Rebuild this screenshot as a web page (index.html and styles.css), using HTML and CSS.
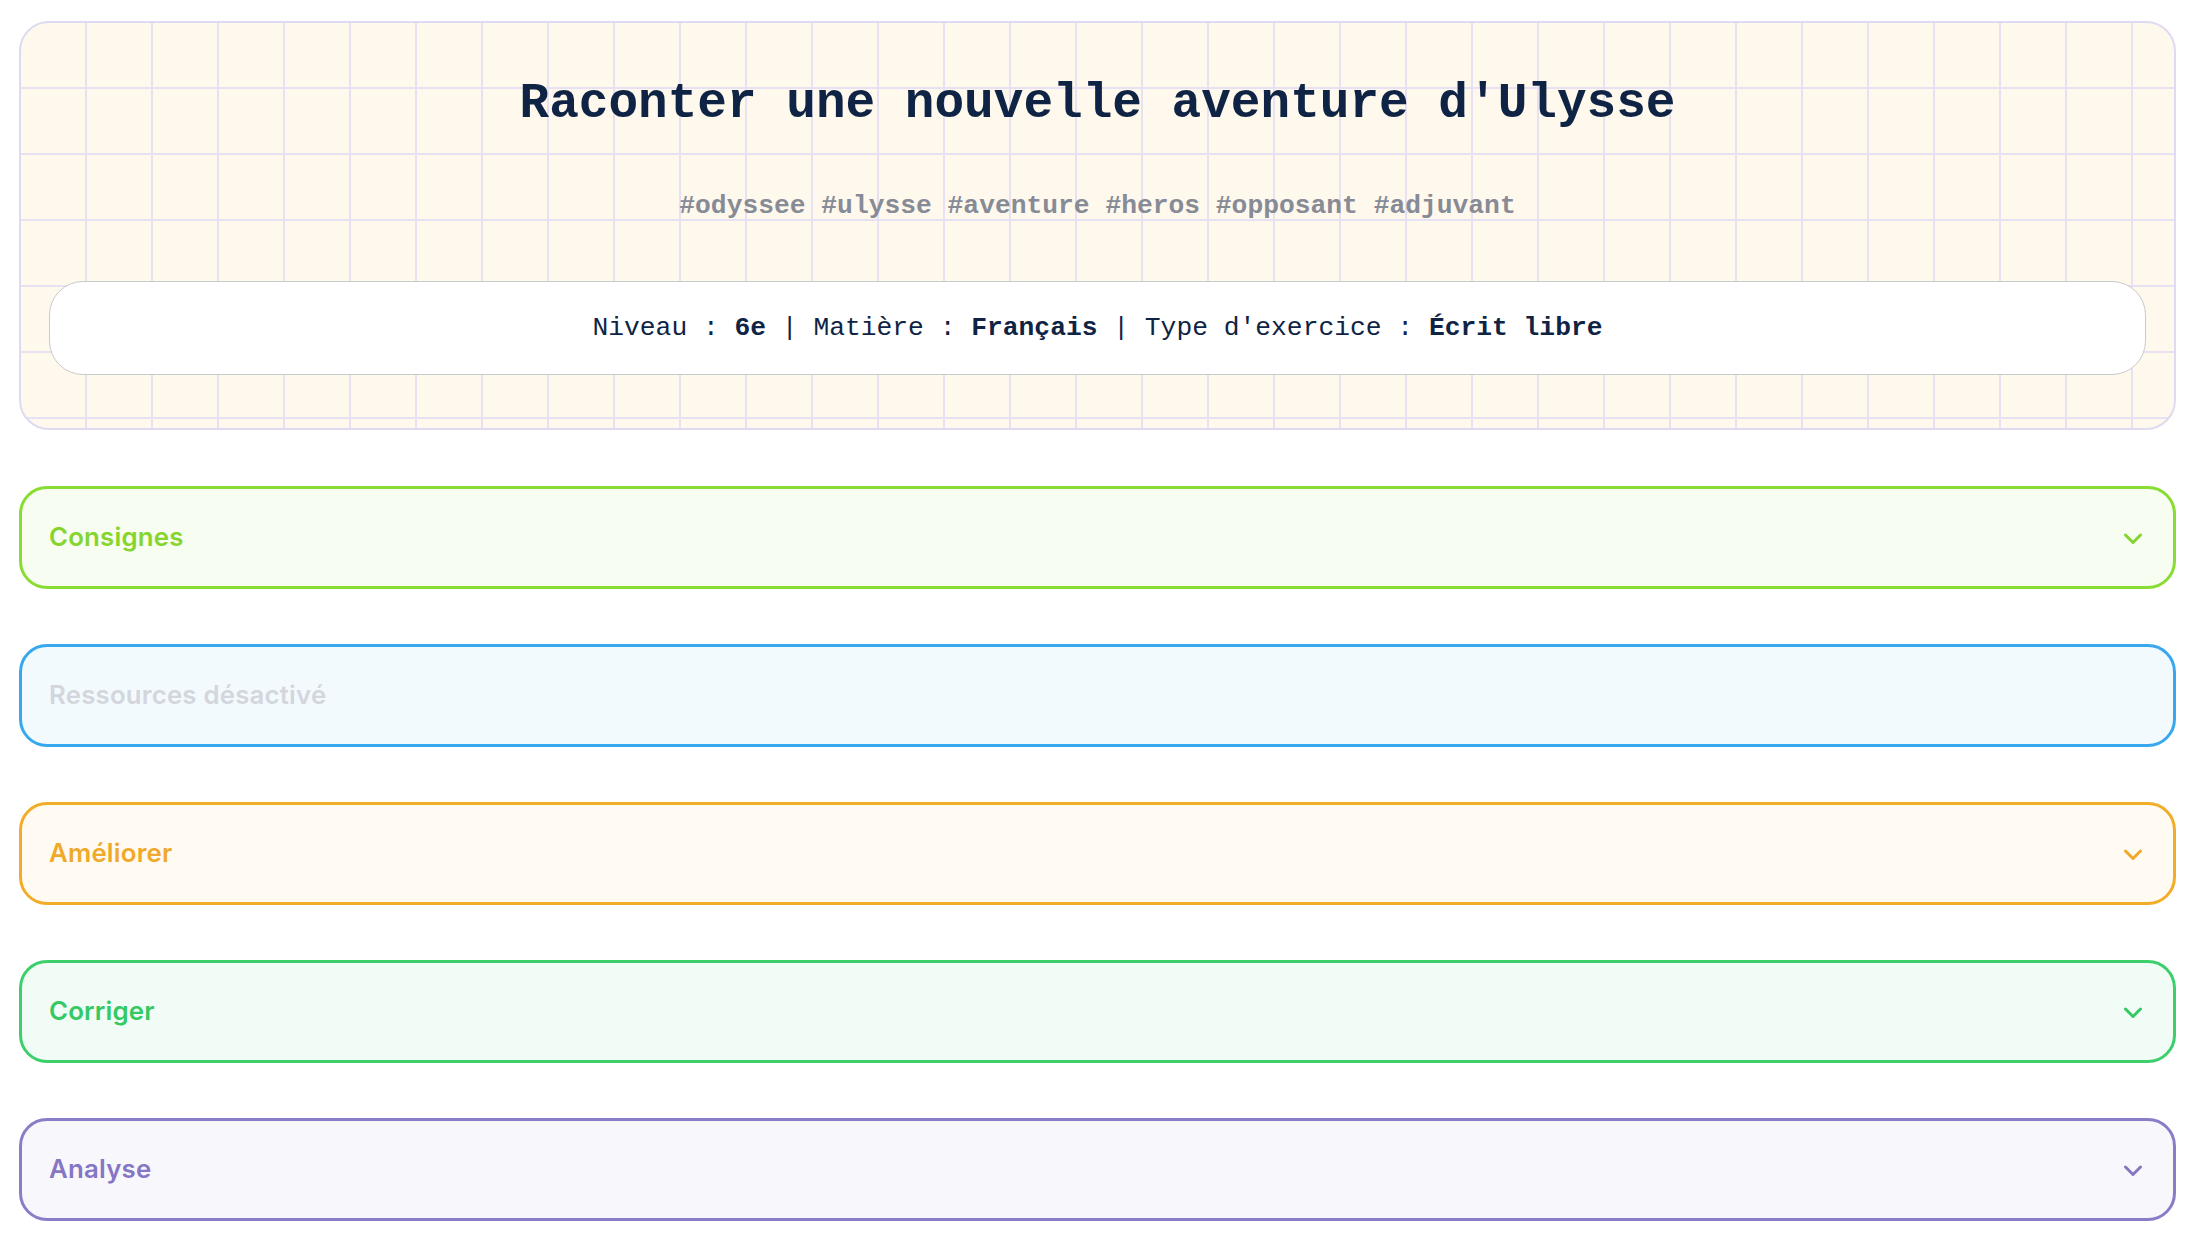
FILE: index.html
```html
<!DOCTYPE html>
<html lang="fr">
<head>
<meta charset="utf-8">
<title>Raconter une nouvelle aventure d'Ulysse</title>
<link rel="stylesheet" href="styles.css">
</head>
<body>
<main class="page">
  <header class="hero">
    <h1 class="hero-title">Raconter une nouvelle aventure d'Ulysse</h1>
    <p class="hero-tags">#odyssee #ulysse #aventure #heros #opposant #adjuvant</p>
    <div class="hero-info">Niveau : <b>6e</b> | Matière : <b>Français</b> | Type d'exercice : <b>Écrit libre</b></div>
  </header>

  <section class="panels">
    <div class="panel panel-lime">
      <span class="panel-label">Consignes</span>
      <svg class="chev" width="20" height="12" viewBox="0 0 20 12"><polyline points="2.5,2 10,9.5 17.5,2" fill="none" stroke="currentColor" stroke-width="3" stroke-linecap="round" stroke-linejoin="round"/></svg>
    </div>
    <div class="panel panel-blue">
      <span class="panel-label panel-label-off">Ressources désactivé</span>
    </div>
    <div class="panel panel-amber">
      <span class="panel-label">Améliorer</span>
      <svg class="chev" width="20" height="12" viewBox="0 0 20 12"><polyline points="2.5,2 10,9.5 17.5,2" fill="none" stroke="currentColor" stroke-width="3" stroke-linecap="round" stroke-linejoin="round"/></svg>
    </div>
    <div class="panel panel-green">
      <span class="panel-label">Corriger</span>
      <svg class="chev" width="20" height="12" viewBox="0 0 20 12"><polyline points="2.5,2 10,9.5 17.5,2" fill="none" stroke="currentColor" stroke-width="3" stroke-linecap="round" stroke-linejoin="round"/></svg>
    </div>
    <div class="panel panel-purple">
      <span class="panel-label">Analyse</span>
      <svg class="chev" width="20" height="12" viewBox="0 0 20 12"><polyline points="2.5,2 10,9.5 17.5,2" fill="none" stroke="currentColor" stroke-width="3" stroke-linecap="round" stroke-linejoin="round"/></svg>
    </div>
  </section>
</main>
</body>
</html>
```
FILE: styles.css
```css
* { box-sizing: border-box; }

html, body {
  margin: 0;
  padding: 0;
  background: #ffffff;
}

.page {
  padding: 21px 28px 20px 19px;
  display: flex;
  flex-direction: column;
}

.hero {
  border: 2px solid #dedaf1;
  border-radius: 30px;
  background-color: #fff8ed;
  background-image:
    linear-gradient(to right, transparent 64px, #e6e2f4 64px, #e6e2f4 66px, transparent 66px),
    linear-gradient(to bottom, transparent 64px, #e6e2f4 64px, #e6e2f4 66px, transparent 66px);
  background-size: 66px 66px;
  background-origin: padding-box;
  padding: 51px 28px 53px;
  text-align: center;
  font-family: "Liberation Mono", "Courier New", monospace;
  color: #0f2444;
}

.hero-title {
  margin: 0;
  font-size: 49.4px;
  line-height: 60px;
  font-weight: 700;
}

.hero-tags {
  margin: 52px 0 0;
  font-size: 26.3px;
  line-height: 40px;
  font-weight: 700;
  color: #868b96;
}

.hero-info {
  margin-top: 55px;
  height: 94px;
  display: flex;
  align-items: center;
  justify-content: center;
  background: #ffffff;
  border: 1.5px solid #c9cacc;
  border-radius: 34px;
  font-size: 26.3px;
  white-space: pre;
}

.hero-info b { font-weight: 700; }

.panels {
  margin-top: 56px;
  display: flex;
  flex-direction: column;
  gap: 55px;
}

.panel {
  height: 103px;
  border: 3px solid;
  border-radius: 28px;
  padding: 0 30px 0 27px;
  display: flex;
  align-items: center;
  justify-content: space-between;
  font-family: "Inter", "Lato", sans-serif;
}

.panel-label {
  font-size: 25.8px;
  font-weight: 600;
  letter-spacing: 0.2px;
  margin-top: -3px;
}

.panel-label-off { color: #d3d6dc; }

.chev { display: block; margin-top: 2px; }

.panel-lime   { border-color: #89dc32; background: #f7fdf0; color: #86d52e; }
.panel-blue   { border-color: #38a8ee; background: #f3fafe; color: #38a8ee; }
.panel-amber  { border-color: #f2ad28; background: #fffbf3; color: #f0a92a; }
.panel-green  { border-color: #3ccf6b; background: #f2fcf6; color: #35c963; }
.panel-purple { border-color: #8a7dc8; background: #f8f8fc; color: #8676c4; }
```
